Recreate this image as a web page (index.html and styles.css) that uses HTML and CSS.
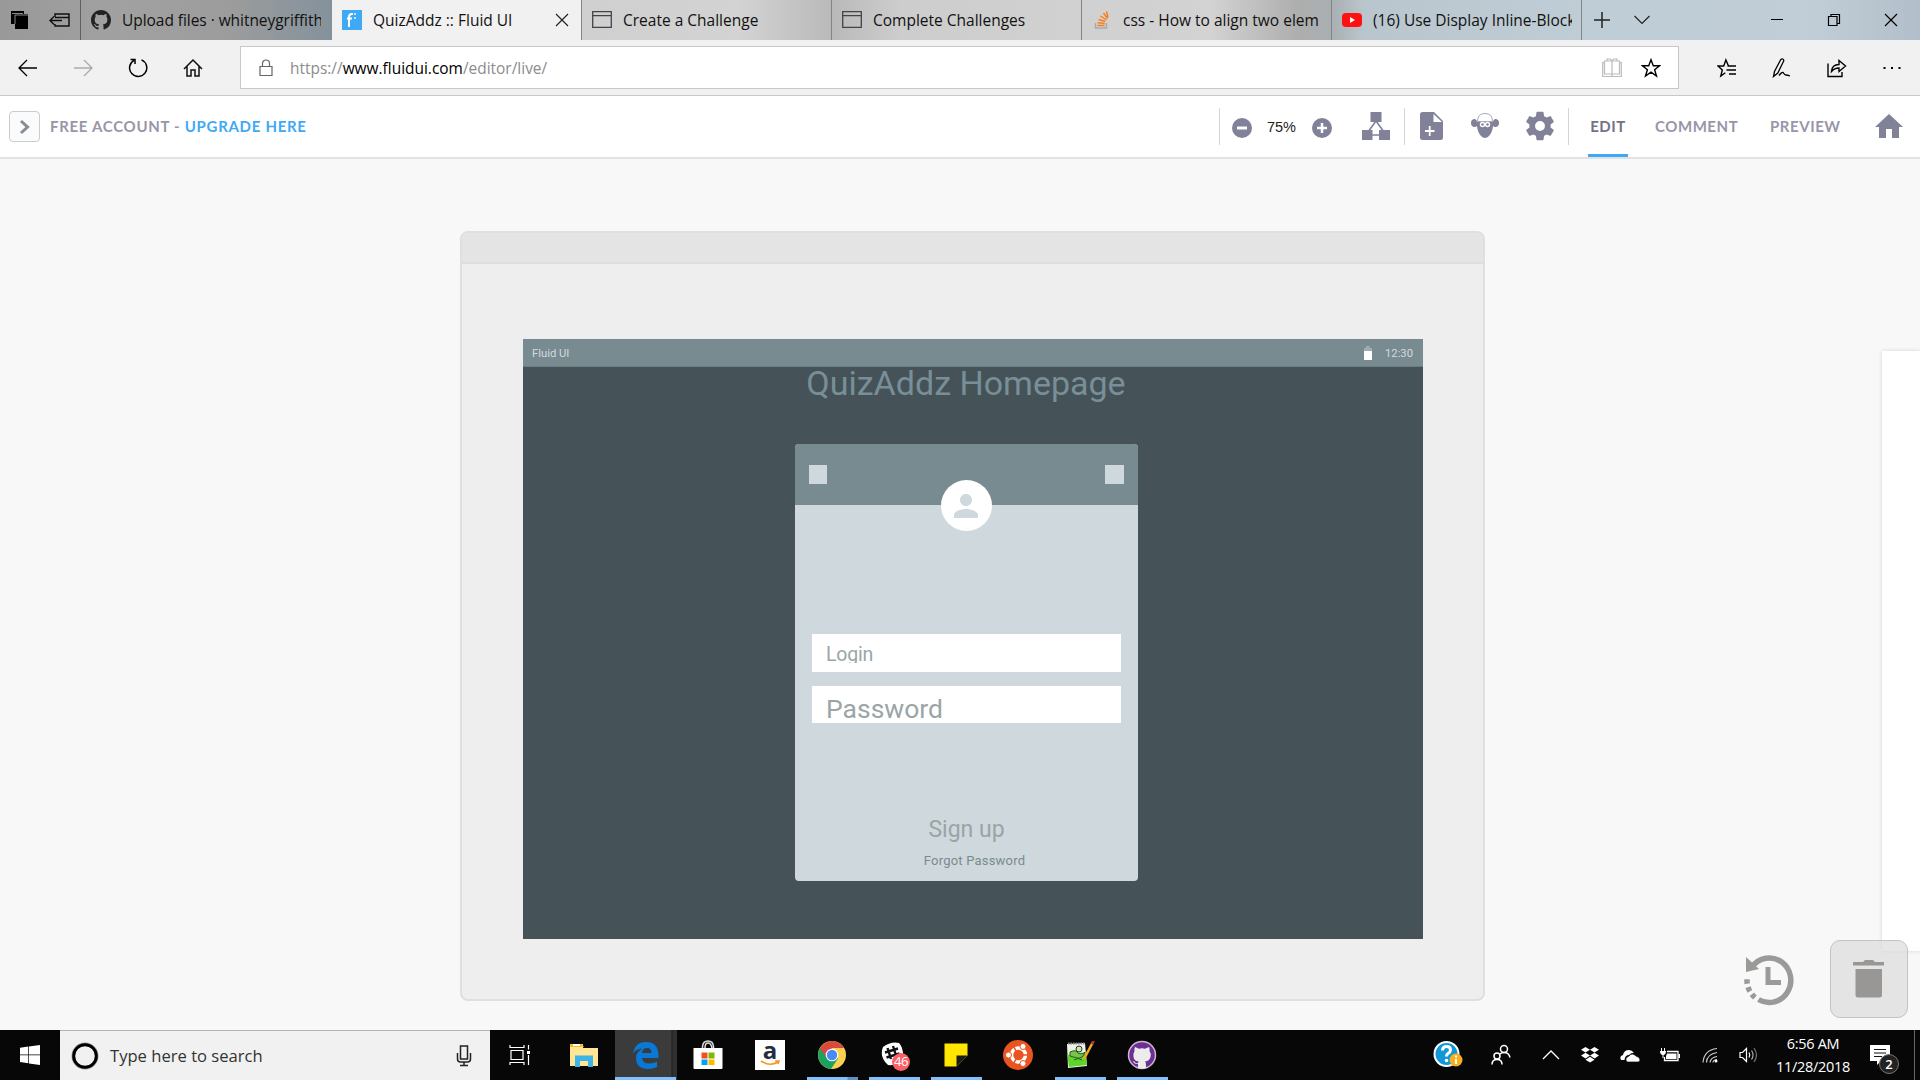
FILE: index.html
```html
<!DOCTYPE html>
<html lang="en">
<head>
<meta charset="utf-8">
<title>QuizAddz :: Fluid UI</title>
<link rel="stylesheet" href="styles.css">
</head>
<body>
<div class="desktop">

  <div class="tabstrip">
    <div class="tab-tools">
      <svg width="20" height="20" viewBox="0 0 20 20"><path d="M1 1h13v3h4v15H5v-5H1z" fill="#000"/><path d="M5 14V5h13M2 3.500h11" fill="none" stroke="#888" stroke-width="1"/></svg>
      <svg width="22" height="16" viewBox="0 0 22 16" fill="none" stroke="#111" stroke-width="1.500"><path d="M6 5V2h14v12H6v-2M6 5.500h14M1 8.500h12M5 4.500l-4 4 4 4"/></svg>
    </div>
    <div class="tab">
      <svg width="20" height="20" viewBox="0 0 16 16" fill="#222"><path d="M8 0C3.580 0 0 3.580 0 8c0 3.540 2.290 6.530 5.470 7.590.4.070.55-.17.55-.38v-1.490c-2.010.37-2.530-.49-2.690-.94-.09-.23-.48-.94-.82-1.130-.28-.15-.68-.52-.01-.53.63-.01 1.080.58 1.230.82.72 1.210 1.870.87 2.330.66.07-.52.28-.87.51-1.070-1.780-.2-3.640-.89-3.640-3.950 0-.87.31-1.590.82-2.150-.08-.2-.36-1.020.08-2.120 0 0 .67-.21 2.200.82a7.500 7.500 0 0 1 4 0c1.530-1.040 2.200-.82 2.200-.82.44 1.100.16 1.920.08 2.120.51.560.82 1.270.82 2.150 0 3.070-1.870 3.750-3.650 3.950.29.25.54.73.54 1.480v2.200c0 .21.15.46.55.38A8 8 0 0 0 16 8c0-4.420-3.580-8-8-8z"/></svg>
      <span class="tab-title t-upload">Upload files · whitneygriffith</span>
    </div>
    <div class="tab tab-active">
      <svg width="20" height="20" viewBox="0 0 20 20"><path d="M0 0h20v20H0z" fill="#3fa9f5"/><path d="M7 17V7q0-3 3-3h1M5 8.500h5" fill="none" stroke="#fff" stroke-width="2"/><path d="M12 3h2v2h-2zM12 7h2v2h-2z" fill="#bfe2fb"/></svg>
      <span class="tab-title">QuizAddz :: Fluid UI</span>
      <svg class="tab-close" width="14" height="14" viewBox="0 0 14 14" stroke="#222" stroke-width="1.200"><path d="M1 1l12 12M13 1L1 13"/></svg>
    </div>
    <div class="tab">
      <svg width="20" height="20" viewBox="0 0 20 20" fill="none" stroke="#444" stroke-width="1.300"><path d="M.7 1.700h18.600v15.600H.7zM.7 5.700h18.600"/></svg>
      <span class="tab-title">Create a Challenge</span>
    </div>
    <div class="tab">
      <svg width="20" height="20" viewBox="0 0 20 20" fill="none" stroke="#444" stroke-width="1.300"><path d="M.7 1.700h18.600v15.600H.7zM.7 5.700h18.600"/></svg>
      <span class="tab-title">Complete Challenges</span>
    </div>
    <div class="tab">
      <svg width="20" height="20" viewBox="0 0 20 20" fill="none"><path d="M3.500 13v5h11v-5" stroke="#aaa" stroke-width="1.500"/><path d="M5.500 15.500h7M5.700 12.700l7 .8M6.500 9.500l6.700 2M8.500 6l6 4M11.500 3l4 5.500M14.500 1.500l1.500 6" stroke="#f48024" stroke-width="1.500"/></svg>
      <span class="tab-title">css - How to align two elem</span>
    </div>
    <div class="tab tab-last">
      <svg width="20" height="20" viewBox="0 0 20 20"><rect x="0" y="3" width="20" height="14" rx="4" fill="#f11"/><path d="M8 7l5 3-5 3z" fill="#fff"/></svg>
      <span class="tab-title">(16) Use Display Inline-Block</span>
    </div>
    <div class="tab-actions">
      <svg width="18" height="18" viewBox="0 0 18 18" stroke="#222" stroke-width="1.500"><path d="M1 9h16M9 1v16"/></svg>
      <svg width="16" height="10" viewBox="0 0 16 10" fill="none" stroke="#222" stroke-width="1.200"><path d="M.5 1L8 8.500 15.500 1"/></svg>
    </div>
    <div class="window-buttons">
      <svg width="14" height="14" viewBox="0 0 14 14" stroke="#000"><path d="M1 6.500h12"/></svg>
      <svg width="14" height="14" viewBox="0 0 14 14" fill="none" stroke="#000" stroke-width="1.200"><path d="M1.500 3.500h8.500v9H1.500zM4 3.500v-2h8.500v9H10"/></svg>
      <svg width="14" height="14" viewBox="0 0 14 14" stroke="#000" stroke-width="1.200"><path d="M1 1l12 12M13 1L1 13"/></svg>
    </div>
  </div>

  <div class="navbar">
    <span class="nav-cell"><svg width="20" height="20" viewBox="0 0 20 20" fill="none" stroke="#000" stroke-width="1.300"><path d="M1 10h18M9 2l-8 8 8 8"/></svg></span>
    <span class="nav-cell"><svg width="20" height="20" viewBox="0 0 20 20" fill="none" stroke="#aaa" stroke-width="1.300"><path d="M1 10h18M11 2l8 8-8 8"/></svg></span>
    <span class="nav-cell"><svg width="20" height="20" viewBox="0 0 20 20" fill="none" stroke="#000" stroke-width="1.500"><path d="M13.500 1.900A8.600 8.600 0 1 1 6 2.300M2.500 1.500H7V6"/></svg></span>
    <span class="nav-cell"><svg width="20" height="20" viewBox="0 0 20 20" fill="none" stroke="#111" stroke-width="1.500"><path d="M1 11l9-9 9 9M4 8.500V18h4v-6h4v6h4V8.500"/></svg></span>
    <div class="address">
      <svg width="14" height="18" viewBox="0 0 14 18" fill="none" stroke="#666" stroke-width="1.200"><path d="M1 7.500h12v9H1zM3.500 7.500V4.500a3.500 3.500 0 0 1 7 0v3"/></svg>
      <span class="url"><span class="dim">https://</span>www.fluidui.com<span class="dim">/editor/live/</span></span>
      <svg width="20" height="20" viewBox="0 0 20 20" fill="none" stroke="#bbb" stroke-width="1.200"><path d="M10 3H2.500v13H10zM10 3h7.500v13H10zM2.500 4.500H.7v14h18.600v-14h-1.800M10 18.500v-15M5 2.500V1h3.500L10 3l1.500-2H15v1.500"/></svg>
      <svg class="fav" width="20" height="20" viewBox="0 0 20 20" fill="none" stroke="#000" stroke-width="1.400"><path d="M10 1.700l2.300 6h6.300l-5 4 1.900 6.300-5.500-3.800L4.500 18l1.900-6.300-5-4h6.300z"/></svg>
    </div>
    <div class="nav-right">
      <span class="nav-cell"><svg width="20" height="20" viewBox="0 0 20 20" fill="none" stroke="#000" stroke-width="1.400"><path d="M11.500 8L8.900 2 6.700 8H1l4.300 4-1.500 6 4.500-3.200M10.500 8h8.500M9.500 12h9.500M12 16h7"/></svg></span>
      <span class="nav-cell"><svg width="20" height="20" viewBox="0 0 20 20" fill="none" stroke="#000" stroke-width="1.300"><path d="M1.500 18.500l1-5L8.500 2q1.500-2 2.800-.6 1 1-.1 2.600L5.800 15z M7 17.500q3.500-4.500 4.500-2.500t2.500 2 4 1"/></svg></span>
      <span class="nav-cell"><svg width="20" height="20" viewBox="0 0 20 20" fill="none" stroke="#000" stroke-width="1.400"><path d="M1 5.500v13h14V14M4.500 13.500q.5-7 7.500-7V2.500L18.500 8 12 13.500V10q-4.500 0-7.500 3.500z"/></svg></span>
      <span class="nav-cell"><svg width="20" height="20" viewBox="0 0 20 20"><path d="M1.500 9h2v2h-2zM9 9h2v2H9zM16.500 9h2v2h-2z"/></svg></span>
    </div>
  </div>

  <div class="app-header">
    <div class="expand"><svg width="12" height="16" viewBox="0 0 12 16" fill="none" stroke="#8a8994" stroke-width="3"><path d="M2 2l6.500 6L2 14"/></svg></div>
    <span class="account">FREE ACCOUNT - <span class="upgrade">UPGRADE HERE</span></span>
    <div class="tools">
      <span class="tool w46 line low"><svg width="20" height="20" viewBox="0 0 20 20"><circle cx="10" cy="10" r="10" fill="#82819a"/><path d="M5 10h10" stroke="#fff" stroke-width="3"/></svg></span>
      <span class="zoom">75%</span>
      <span class="tool w48 low"><svg width="20" height="20" viewBox="0 0 20 20"><circle cx="10" cy="10" r="10" fill="#82819a"/><path d="M5 10h10M10 5v10" stroke="#fff" stroke-width="2.500"/></svg></span>
      <span class="tool w58"><svg width="28" height="28" viewBox="0 0 28 28" fill="#82819a"><path d="M8.500 0h11v10h-11zM0 18h10.500v10H0zM17 18h11v10H17z"/><path d="M14 9L6 20M14 9l8 11M10 23h8" stroke="#82819a" stroke-width="1.600"/></svg></span>
      <span class="tool w54 line"><svg width="23" height="28" viewBox="0 0 23 28"><path d="M2.500 0H14l9 9v16.500q0 2.500-2.500 2.500h-18Q0 28 0 25.500v-23Q0 0 2.500 0z" fill="#82819a"/><path d="M13.500 2v8H22z" fill="#fff"/><path d="M5 19h9.500M9.700 14v10" stroke="#fff" stroke-width="1.800"/></svg></span>
      <span class="tool w54"><svg width="30" height="28" viewBox="0 0 30 28"><path d="M7 9.500h16q.5-3 3-2.500 3 .5 3 4t-3 4q-2 .3-3-1-.5 6-4 10-4 4-8 0-3.500-4-4-10-1 1.300-3 1-3-.5-3-4t3-4q2.500-.5 3 2.500z" fill="#82819a"/><path d="M7.500 9.500q0-8 7.500-8t7.500 8z" fill="#fff" stroke="#aaa9b8"/><circle cx="12.500" cy="12.500" r="2" fill="none" stroke="#fff" stroke-width="1.400"/><circle cx="17.500" cy="12.500" r="2" fill="none" stroke="#fff" stroke-width="1.400"/></svg></span>
      <span class="tool w56"><svg width="34" height="34" viewBox="0 0 24 24" fill="#82819a"><path d="M19.430 12.980c.04-.32.070-.64.070-.98s-.03-.66-.07-.98l2.110-1.650c.19-.15.24-.42.120-.64l-2-3.460c-.12-.22-.39-.3-.61-.22l-2.490 1c-.52-.4-1.080-.73-1.690-.98l-.38-2.650A.49.49 0 0 0 14 2h-4c-.25 0-.46.18-.49.420l-.38 2.650c-.61.250-1.170.590-1.690.980l-2.490-1c-.23-.09-.49 0-.61.220l-2 3.460c-.13.220-.07.490.120.640l2.110 1.650c-.04.320-.07.650-.07.980s.030.660.070.980l-2.110 1.650c-.19.150-.24.420-.12.640l2 3.460c.12.220.39.300.61.220l2.490-1c.52.400 1.080.730 1.690.980l.38 2.650c.03.240.24.420.49.420h4c.25 0 .46-.18.49-.42l.38-2.650c.61-.25 1.170-.59 1.690-.98l2.490 1c.23.090.49 0 .61-.22l2-3.460c.12-.22.070-.49-.12-.64zM12 15.500a3.500 3.500 0 1 1 0-7 3.500 3.500 0 0 1 0 7z"/></svg></span>
      <nav class="modes line">
        <span class="mode m-edit">EDIT</span>
        <span class="mode m-comment">COMMENT</span>
        <span class="mode m-preview">PREVIEW</span>
        <svg class="home" width="28" height="24" viewBox="0 0 28 24" fill="#82819a"><path d="M14 0l14 13h-4v11h-7v-9h-6v9H4V13H0z"/></svg>
      </nav>
    </div>
  </div>

  <main class="canvas">
    <div class="device">
      <div class="device-top"></div>
      <div class="screen">
        <div class="status">
          <span>Fluid UI</span>
          <svg class="battery" width="8" height="14" viewBox="0 0 8 14"><path d="M0 2h2V0h3.500v2H8v3H0z" fill="#9fadb1"/><path d="M0 5h8v9H0z" fill="#fff"/></svg>
          <span class="clock">12:30</span>
        </div>
        <h1 class="title">QuizAddz Homepage</h1>
        <section class="card">
          <div class="card-head">
            <span class="square"></span>
            <span class="square"></span>
            <span class="avatar"><svg width="36" height="36" viewBox="0 0 24 24" fill="#cfd8dd"><path d="M12 12c2.210 0 4-1.790 4-4s-1.790-4-4-4-4 1.790-4 4 1.790 4 4 4zm0 2c-2.670 0-8 1.340-8 4v2h16v-2c0-2.660-5.330-4-8-4z"/></svg></span>
          </div>
          <div class="field login"><span>Login</span></div>
          <div class="field password"><span>Password</span></div>
          <div class="signup">Sign up</div>
          <div class="forgot">Forgot Password</div>
        </section>
      </div>
    </div>
    <div class="next-page"></div>
    <div class="float-tools">
      <svg class="history" width="52" height="56" viewBox="0 0 52 56" fill="none" stroke="#9b9a98"><path d="M9 16A21.500 22.300 0 1 1 15.500 48.500" stroke-width="5.500"/><path d="M12 46.500A21.500 22.300 0 0 1 4 28" stroke-width="5.500" stroke-dasharray="4.500 3.500"/><path d="M3 6v15l13-3z" fill="#9b9a98" stroke="none"/><path d="M25 16v15.500h13" stroke-width="5"/></svg>
      <div class="trash"><svg width="32" height="40" viewBox="0 0 32 40" fill="#989796"><path d="M0 3h10l2-2h8l2 2h9v3.500H0zM2.500 10H29v26q0 2.500-2.500 2.500H5Q2.500 38.500 2.500 36z"/></svg></div>
    </div>
  </main>

  <footer class="taskbar">
    <div class="start"><svg width="20" height="20" viewBox="0 0 20 20" fill="#fff"><path d="M0 2.800l8.300-1.200v7.900H0zM9 1.500L20 0v9.500H9zM0 10.300h8.300v7.900L0 17zM9 10.300h11V20L9 18.400z"/></svg></div>
    <div class="search">
      <svg width="28" height="28" viewBox="0 0 28 28" fill="none"><circle cx="14" cy="14" r="12.500" stroke="#999" stroke-width="2"/><circle cx="14" cy="14" r="11.300" stroke="#000" stroke-width="3"/></svg>
      <span class="search-text">Type here to search</span>
      <svg width="16" height="22" viewBox="0 0 16 22" fill="none" stroke="#222" stroke-width="1.500"><path d="M4.500 1h7v13h-7zM1.500 8v6q0 3 3 3h7q3 0 3-3V8M8 17v3.500M4 20.500h8"/></svg>
    </div>
    <div class="view"><svg width="22" height="20" viewBox="0 0 22 20" fill="none" stroke="#fff" stroke-width="1.200"><path d="M2 5.500h12v9H2zM1 0v2.500h14V0M1 20v-2.500h14V20M19.500 0v4.500M19.500 10v10"/><path d="M18 6h3v3h-3z" fill="#fff" stroke="none"/></svg></div>
    <div class="apps">
      <span class="app"><svg width="28" height="26" viewBox="0 0 28 26"><path d="M0 2h13v4h15v18H0z" fill="#ffe594"/><path d="M0 2h12l2 3H0z" fill="#f5bd21"/><path d="M3 2h7v2H3z" fill="#fff"/><path d="M5 25V13.500h18V25h-5v-6h-8v6z" fill="#3db3e8"/></svg></span>
      <span class="app edge on"><svg width="28" height="28" viewBox="0 0 28 28"><path fill="#0a78d7" fill-rule="evenodd" d="M1 12.500Q3 1 14 1q12 0 12.500 13v3H10q.5 5.500 7.500 5.500 4 0 7.500-2v5.500q-4 2-9 2Q4 27.500 4 17q0-6 6.500-9.500Q4 8 1 12.500zM10 12h9.500q0-5-4.500-5t-5 5z"/></svg></span>
      <span class="app"><svg width="30" height="30" viewBox="0 0 30 30"><path d="M9.500 9V6.500Q10 1 15 1t5.500 5.500V9M12 8q0-5 3-5t4 5" fill="none" stroke="#ddd" stroke-width="1.500"/><path d="M.5 8h29v20q0 1-1 1h-27q-1 0-1-1z" fill="#fff"/><path d="M8.500 12.500h6v6h-6z" fill="#f25022"/><path d="M15.500 12.500h6v6h-6z" fill="#7fba00"/><path d="M8.500 19.500h6v5.500h-6z" fill="#00a4ef"/><path d="M15.500 19.500h6v5.500h-6z" fill="#ffb900"/></svg></span>
      <span class="app"><span class="amazon">a<svg width="20" height="6" viewBox="0 0 20 6" fill="none" stroke="#f7981d" stroke-width="1.600"><path d="M1 1q9 6 17 1M15 1h4l-1 3"/></svg></span></span>
      <span class="app on multi"><svg width="28" height="28" viewBox="0 0 28 28"><circle cx="14" cy="14" r="14" fill="#fdd04f"/><path d="M14 14L2 7A14 14 0 0 0 13 28l7-10.500z" fill="#1aa260"/><path d="M2 7a14 14 0 0 1 24.200 0H14L8.500 17z" fill="#d9493d"/><circle cx="14" cy="14" r="6.300" fill="#fff"/><circle cx="14" cy="14" r="5.200" fill="#4a8af4"/></svg></span>
      <span class="app on"><svg width="28" height="28" viewBox="0 0 28 28"><path d="M3 6Q11 0 19 2q5 5 4 17-6 6-15 5Q-1 16 3 6z" fill="#fff"/><path d="M7.500 7l3.500 11M13 5l3.500 11M5 11.500l13-4M6.500 16.500l13-4" stroke="#111" stroke-width="2.400"/></svg><span class="slack-count">46</span></span>
      <span class="app on"><svg width="24" height="24" viewBox="0 0 24 24"><path d="M.5.500h23v12L12.500 23.500H.5z" fill="#ffe500"/><path d="M12.500 12.500h11L12.500 23.500z" fill="#1b1b1b"/></svg></span>
      <span class="app"><svg width="30" height="30" viewBox="0 0 30 30"><circle cx="15" cy="15" r="15" fill="#e95420"/><circle cx="15.500" cy="15" r="7" fill="none" stroke="#fff" stroke-width="3.500"/><path d="M15.500 15L9 26.200M15.500 15L9 3.800M15.500 15H29" stroke="#e95420" stroke-width="1.500"/><g fill="#fff" stroke="#e95420"><circle cx="5.500" cy="15" r="3"/><circle cx="20" cy="6.500" r="3"/><circle cx="20" cy="23.500" r="3"/></g></svg></span>
      <span class="app on"><svg width="30" height="28" viewBox="0 0 30 28"><path d="M2 3l18-1 2 23-19 2z" fill="#eef3ea"/><path d="M2.500 14l18-3 1.300 13-18 2z" fill="#5fd52c"/><path d="M3 2.500h17" stroke="#888" stroke-width="2" stroke-dasharray="1.500 1"/><path d="M5 11q6-3 8 1 5 2 7-1-2 7-8 6-4-1-7-2zM9 19q4-3 8 0" fill="#78c44b" stroke="#245c1c"/><circle cx="14" cy="8" r="3" fill="#c8e8b0" stroke="#333"/><path d="M28 1l-9 17" stroke="#f5a623" stroke-width="2.500"/><path d="M29 0l-2 3" stroke="#a33" stroke-width="2.500"/></svg></span>
      <span class="app on"><svg width="30" height="30" viewBox="0 0 30 30"><circle cx="15" cy="15" r="13.500" fill="#6e2f93" stroke="#c9b8d4" stroke-width="1.500"/><path d="M8 7l4 1.700q3-.7 6 0L22 7q1 2 .5 4 2 2.500 1 6-1 4-5.500 4.500 1 1 1 3v3.500q-4 1.500-8 0v-4q-4 .5-5-3 1 0 2 1.300t3 .7q0-1 .8-1.500-4.800-.5-5.300-4.500-.5-3.500 1-6Q7 9 8 7z" fill="#ececec"/></svg></span>
    </div>
    <div class="tray">
      <span class="tray-cell c-help"><svg width="30" height="30" viewBox="0 0 30 30"><circle cx="13.500" cy="14" r="13" fill="#fff"/><circle cx="13.500" cy="14" r="11" fill="#0f97d7"/><path d="M9.500 10.500q0-4 4-4t4 3.500q0 2-2.500 3.500-1.500 1-1.500 3" fill="none" stroke="#fff" stroke-width="3"/><circle cx="13.500" cy="20.500" r="1.800" fill="#fff"/><circle cx="23" cy="20" r="6.500" fill="#f9b01e"/><path d="M23 19v5M23 15.500v2" stroke="#fff" stroke-width="2"/></svg></span>
      <span class="tray-cell c-people"><svg width="20" height="22" viewBox="0 0 20 22" fill="none" stroke="#fff" stroke-width="1.500"><circle cx="13" cy="5" r="3.500"/><circle cx="6" cy="12" r="3"/><path d="M1 20.500q0-5 5-5t5 5M13 8.500q5 0 6 5M9 10q1.500-1.500 4-1.500"/></svg></span>
      <span class="tray-cell c-up"><svg width="18" height="10" viewBox="0 0 18 10" fill="none" stroke="#fff" stroke-width="1.300"><path d="M1 9l8-8 8 8"/></svg></span>
      <span class="tray-cell"><svg width="18" height="16" viewBox="0 0 18 16" fill="#fff"><path d="M4.500 0L9 2.800 4.500 5.600 0 2.800zM13.500 0L18 2.800l-4.500 2.800L9 2.800zM4.500 5.800L9 8.600l-4.500 2.800L0 8.600zM13.500 5.800L18 8.600l-4.500 2.800L9 8.600zM9 9.800l4.500 2.900L9 15.600l-4.500-2.900z"/></svg></span>
      <span class="tray-cell"><svg width="20" height="13" viewBox="0 0 20 13" fill="#fff"><path d="M1 11q-2-4 2-5 1-5 6-5 3 0 5 3-3-.5-5 2-4 0-4.500 5z"/><path d="M7 13q-3-4 2-6 3-4 7 0 4 1 4 4 0 2-2 2z" stroke="#050505" stroke-width=".7"/></svg></span>
      <span class="tray-cell"><svg width="20" height="14" viewBox="0 0 20 14"><path d="M7 3.500h11v9H4.500V9" fill="none" stroke="#fff" stroke-width="1.300"/><path d="M7 5.500h9.500v5.500H6V8zM18.500 6H20v4h-1.500zM0 3h6q0 4-3 4T0 3z" fill="#fff"/><path d="M1.500 0v3M4.500 0v3M3 6v4" stroke="#fff"/></svg></span>
      <span class="tray-cell"><svg width="16" height="16" viewBox="0 0 16 16" fill="none" stroke="#ccc" stroke-width="1.200"><path d="M1 15.500Q2 3 15 1.500M4.500 15.500Q5 7 15 5.500M8 15.500q.5-5 7-6M11 15.500q0-2.500 4-3"/><circle cx="14" cy="14" r="1.500" fill="#fff" stroke="none"/></svg></span>
      <span class="tray-cell c-vol"><svg width="20" height="18" viewBox="0 0 20 18" fill="none" stroke="#fff" stroke-width="1.200"><path d="M1 6.500h2.500l4-4v13l-4-4H1zM10 6.500q1.500 2.500 0 5"/><path d="M12.500 4.500q3 4.500 0 9" stroke="#aaa"/><path d="M15 2q5 7 0 14" stroke="#777"/></svg></span>
      <div class="datetime"><span>6:56 AM</span><span>11/28/2018</span></div>
      <div class="notify"><svg width="20" height="20" viewBox="0 0 20 20"><path d="M0 0h20v16h-9l-4 4v-4H0z" fill="#fff"/><path d="M4 4.500h12M4 8h12M4 11.500h8" stroke="#111" stroke-width="1.200"/></svg><span class="count">2</span></div>
    </div>
  </footer>
</div>
</body>
</html>
```
FILE: styles.css
```css
* { box-sizing: border-box; }
body { margin: 0; font-family: "Open Sans", sans-serif; color: #111; }
svg { display: block; flex: none; }
.desktop { width: 1920px; height: 1080px; display: flex; flex-direction: column; overflow: hidden; background: #f7f7f7; }

/* Browser tabs */
.tabstrip {
  height: 40px; flex: none; display: flex; align-items: stretch;
  background: linear-gradient(90deg, #999 0, #a1a1a1 120px, #9c9c9c 230px, #84929c 331px, #cfcfcf 560px, #d3d3d3 740px, #c2c2c2 800px, #b9b9b9 832px, #cdcdcd 900px, #d3d3d3 1210px, #adadad 1300px, #a9afb2 1331px, #bac6ce 1365px, #bfcdd6 1600px, #c1ced7 1810px, #b2bfca 1920px);
}
.tab-tools { width: 81px; display: flex; align-items: center; gap: 19px; padding-left: 10px; border-right: 1px solid #606060; }
.tab { width: 250px; display: flex; align-items: center; padding-left: 10px; border-right: 1px solid #858585; font-size: 15.500px; white-space: nowrap; }
.tab:nth-child(2) { width: 251px; border-right: 0; }
.tab-active { background: #f1f1f1; }
.tab-title { margin-left: 11px; overflow: hidden; width: 199px; }
.tab-active .tab-title { width: 178px; }
.tab-close { margin-left: 4px; }
.t-upload { letter-spacing: -.05px; }
.tab-actions { width: 76px; display: flex; align-items: center; gap: 23px; padding-left: 11px; }
.window-buttons { margin-left: auto; display: flex; align-items: center; gap: 43px; padding-right: 22px; }

/* Browser navigation */
.navbar { height: 56px; flex: none; display: flex; align-items: center; background: #f1f1f1; border-bottom: 1px solid #c8c8c8; }
.nav-cell { width: 55px; display: flex; justify-content: center; }
.address { width: 1439px; height: 43px; margin-left: 20px; padding: 0 17px 0 18px; display: flex; align-items: center; background: #fff; border: 1px solid #c8c8c8; }
.url { flex: 1; margin-left: 17px; font-size: 15.450px; color: #000; }
.dim { color: #8c8c8c; }
.fav { margin-left: 19px; }
.nav-right { display: flex; margin-left: 20px; }

/* Editor header */
.app-header { height: 63px; flex: none; display: flex; align-items: center; padding-left: 9px; background: #fff; border-bottom: 2px solid #e2e2e2; font-family: Lato, sans-serif; font-weight: 700; font-size: 15px; color: #9896a8; }
.expand { width: 31px; height: 31px; display: flex; align-items: center; justify-content: center; border: 1px solid #ccc; border-radius: 4px; background: #fafbfd; }
.account { margin-left: 10px; padding-bottom: 2px; letter-spacing: .7px; }
.upgrade { color: #3fa9f5; }
.tools { margin-left: auto; width: 701px; height: 61px; display: flex; align-items: center; }
.tool, .modes { height: 37px; display: flex; align-items: center; justify-content: center; }
.tool svg { margin-top: -1px; }
.line { border-left: 1px solid #d5d5d5; }
.low { padding-top: 4px; }
.w46 { width: 46px; padding-right: 1px; }
.w48 { width: 48px; }
.w54 { width: 54px; }
.w56 { width: 56px; }
.w58 { width: 58px; padding-left: 2px; }
.zoom { width: 33px; text-align: center; color: #222; font: 14.5px "Liberation Sans", sans-serif; }
.modes { width: 352px; justify-content: flex-start; padding-left: 19px; }
.mode { height: 61px; flex: none; display: flex; align-items: center; letter-spacing: .55px; padding-bottom: 2px; }
.m-edit { width: 40px; color: #737286; border-bottom: 3px solid #3fa9f5; border-top: 3px solid transparent; justify-content: center; }
.m-comment { width: 115px; margin-left: 27px; }
.m-preview { width: 105px; }
.home { margin-top: -1px; }

/* Design canvas */
.canvas { position: relative; height: 871px; flex: none; display: flex; background: #f8f8f8; }
.device { width: 1025px; height: 770px; margin: 72px 0 0 460px; border: 2px solid #dfdfdf; border-radius: 8px; background: #eee; }
.device-top { height: 31px; background: #e4e4e4; border-bottom: 2px solid #dedede; border-radius: 6px 6px 0 0; }
.screen { width: 900px; height: 600px; margin: 75px 0 0 61px; background: #455257; font-family: Roboto, sans-serif; display: flex; flex-direction: column; }
.status { height: 28px; flex: none; display: flex; align-items: center; padding: 1px 10px 0 9px; background: #788b90; border-bottom: 1px solid #6a7d83; color: #d3dadd; font-size: 11.250px; }
.battery { margin-left: auto; }
.clock { margin-left: 13px; }
.title { margin: -4px 0 0 -14px; height: 40px; text-align: center; font-size: 34px; line-height: 40px; font-weight: 400; color: #788f98; white-space: nowrap; }
.card { width: 343px; height: 437px; margin: 41px 0 0 272px; display: flex; flex-direction: column; border-radius: 4px; background: #cfd8dd; overflow: hidden; }
.card-head { position: relative; height: 61px; flex: none; display: flex; justify-content: space-between; align-items: center; padding: 0 14px; background: #788b90; }
.square { width: 19px; height: 19px; background: #cfd8dd; }
.square:first-child { width: 18px; }
.avatar { position: absolute; left: 146px; top: 36px; width: 51px; height: 51px; border-radius: 50%; background: #fff; display: flex; align-items: center; justify-content: center; }
.avatar svg { margin-left: -1px; }
.field { width: 309px; height: 38px; margin-left: 17px; padding-left: 14px; background: #fff; color: #9ba5a7; overflow: hidden; flex: none; }
.login { margin-top: 129px; font-size: 19.500px; letter-spacing: -.2px; }
.login span { display: block; height: 29px; line-height: 42px; overflow: hidden; }
.password { margin-top: 14px; height: 37px; font-size: 26.500px; line-height: 45px; }
.signup { margin-top: 92px; height: 30px; line-height: 30px; text-align: center; font-size: 23px; color: #9aa4a6; }
.forgot { height: 20px; margin-top: 6px; line-height: 20px; font-size: 13px; letter-spacing: .2px; color: #7a8b90; text-align: center; padding-left: 16px; }
.next-page { position: absolute; left: 1882px; top: 192px; width: 38px; height: 600px; background: #fff; box-shadow: 0 0 4px rgba(0,0,0,.15); }
.float-tools { position: absolute; left: 1743px; top: 781px; display: flex; align-items: center; gap: 35px; }
.trash { width: 78px; height: 78px; display: flex; align-items: center; justify-content: center; border: 1px solid #c3c3c3; border-radius: 10px; background: rgba(220,220,220,.7); }

/* Taskbar */
.taskbar { height: 50px; flex: none; display: flex; background: #070707; color: #fff; }
.start { width: 60px; display: flex; align-items: center; justify-content: center; }
.search { width: 430px; display: flex; align-items: center; padding: 0 18px 0 11px; background: #f1f1f1; border-top: 1px solid #b5b5b5; color: #333; font-size: 16.600px; }
.search-text { flex: 1; margin-left: 11px; }
.view { width: 63px; display: flex; align-items: center; padding-left: 19px; }
.apps { display: flex; }
.app { position: relative; width: 62px; display: flex; align-items: center; justify-content: center; }
.on::after { content: ""; position: absolute; left: 6px; bottom: 0; width: 51px; height: 3px; background: #83c0fb; }
.multi::after { background: linear-gradient(90deg, #83c0fb 40px, #5f92c3 41px); }
.edge { background: linear-gradient(90deg, #3b3b3b 56px, #1d1d1d 57px, #303030 58px); }
.edge::after { left: 0; width: 61px; }
.amazon { width: 30px; height: 30px; display: flex; flex-direction: column; align-items: center; background: #fff; color: #232f3e; font-weight: 700; font-size: 24px; line-height: 20px; }
.slack-count { position: absolute; left: 29px; top: 23px; width: 18px; height: 18px; border-radius: 50%; background: #fc5f66; font: 13px/17px "Open Sans", sans-serif; letter-spacing: -.5px; text-align: center; }
.tray { margin-left: auto; display: flex; align-items: center; }
.tray-cell { width: 40px; display: flex; justify-content: center; }
.c-help { width: 44px; }
.c-people { width: 62px; }
.c-up { width: 38px; }
.c-vol { width: 38px; }
.datetime { width: 92px; display: flex; flex-direction: column; align-items: center; font-size: 14.500px; line-height: 23px; letter-spacing: -.3px; white-space: nowrap; padding-right: 2px; }
.notify { position: relative; width: 55px; height: 50px; padding: 15px 0 0 10px; margin-right: 5px; border-right: 1px solid #666; }
.count { position: absolute; left: 19px; top: 24px; width: 20px; height: 20px; border: 1px solid #777; border-radius: 50%; background: #222; font-size: 13px; font-weight: 600; line-height: 18px; text-align: center; }
```
